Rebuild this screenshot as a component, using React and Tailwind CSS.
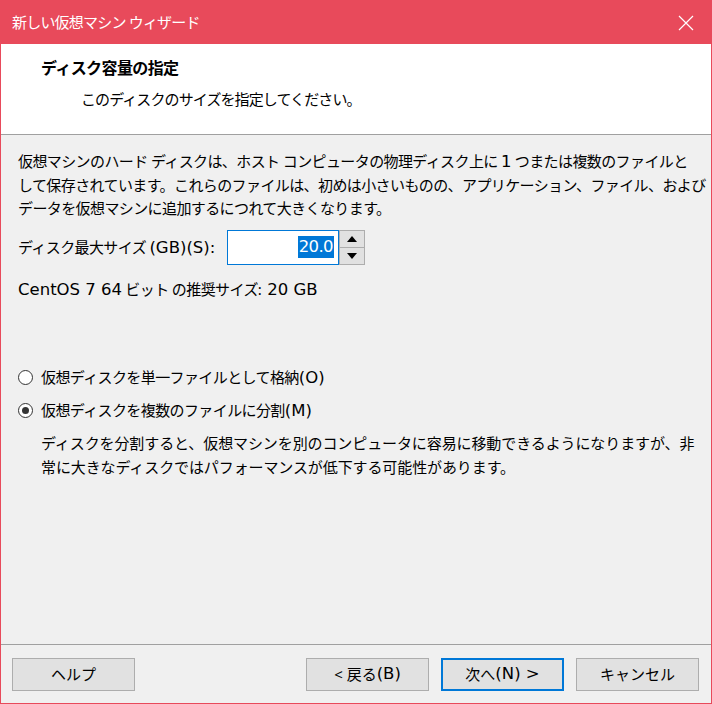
import React from "react";

const font = "font-['Noto_Sans','Noto_Sans_CJK_JP',sans-serif]";

// latin runs in the shot are Segoe UI-ish, much wider than the kana
const L = ({ children }) => (
    <span className="font-['DejaVu_Sans',sans-serif] text-[16.5px] leading-none tracking-normal">{children}</span>
);

const Btn = ({ children, primary }) => (
    <div
        className={`w-[123px] h-[33px] flex items-center justify-center bg-[#E1E1E1] text-[15px] text-black ${
            primary ? "border-2 border-[#0078D7]" : "border border-[#ADADAD]"
        }`}
    >
        {children}
    </div>
);

const Radio = ({ checked, children }) => (
    <div className="flex items-center h-[24px]">
        <span className="w-[15px] h-[15px] rounded-full border border-[#333] bg-white flex items-center justify-center mr-[8px]">
            {checked && <span className="w-[7px] h-[7px] rounded-full bg-[#333]" />}
        </span>
        <span>{children}</span>
    </div>
);

export default function App() {
    return (
        <div className={`w-[712px] h-[704px] flex flex-col bg-[#F0F0F0] border-x border-b border-[#E84A5B] ${font} text-[15px] text-black`}>
            <div className="h-[44px] -mx-px bg-[#E84A5B] flex items-center justify-between pl-[12px] pr-[18px] text-white">
                <span className="text-[15px] tracking-[-0.8px]">新しい仮想マシン ウィザード</span>
                <svg width="16" height="16" viewBox="0 0 16 16" className="mt-[1px]">
                    <path d="M1 1 L15 15 M15 1 L1 15" stroke="#fff" strokeWidth="1.2" />
                </svg>
            </div>

            <div className="h-[91px] bg-white border-b border-[#A0A0A0] pt-[12px]">
                <div className="pl-[40px] font-bold text-[16px] leading-[24px] tracking-[-0.6px]">ディスク容量の指定</div>
                <div className="pl-[80px] mt-[7px] leading-[24px] tracking-[-0.9px]">このディスクのサイズを指定してください。</div>
            </div>

            <div className="flex-1 pl-[17px] pt-[15px] border-b border-[#A0A0A0]">
                <div className="leading-[23.5px] whitespace-nowrap tracking-[-0.6px]">
                    <div>仮想マシンのハード ディスクは、ホスト コンピュータの物理ディスク上に <L>1</L> つまたは複数のファイルと</div>
                    <div>して保存されています。これらのファイルは、初めは小さいものの、アプリケーション、ファイル、および</div>
                    <div>データを仮想マシンに追加するにつれて大きくなります。</div>
                </div>

                <div className="flex items-center mt-[9px] h-[35px] tracking-[-0.6px]">
                    <span className="w-[209px] whitespace-nowrap">ディスク最大サイズ <L>(GB)(S):</L></span>
                    <div className="w-[112px] h-[35px] border border-[#0078D7] bg-white flex items-center justify-end pr-[4px]">
                        <span className="bg-[#0078D7] text-white font-['DejaVu_Sans',sans-serif] text-[16.5px] leading-[22px] px-px">20.0</span>
                    </div>
                    <div className="w-[26px] h-[35px] flex flex-col border border-[#ADADAD] bg-[#E1E1E1]">
                        <div className="flex-1 flex items-center justify-center border-b border-[#ADADAD]">
                            <svg width="10" height="6" viewBox="0 0 10 6"><path d="M0 6 L5 0 L10 6 Z" fill="#000" /></svg>
                        </div>
                        <div className="flex-1 flex items-center justify-center">
                            <svg width="10" height="6" viewBox="0 0 10 6"><path d="M0 0 L5 6 L10 0 Z" fill="#000" /></svg>
                        </div>
                    </div>
                </div>

                <div className="mt-[12px] leading-[24px] tracking-[-0.6px]">
                    <L>CentOS 7 64</L> ビット の推奨サイズ:<span className="ml-[6px]"><L>20 GB</L></span>
                </div>

                <div className="mt-[65px] tracking-[-0.6px]">
                    <Radio>仮想ディスクを単一ファイルとして格納<L>(O)</L></Radio>
                </div>
                <div className="mt-[9px] tracking-[-0.6px]">
                    <Radio checked>仮想ディスクを複数のファイルに分割<L>(M)</L></Radio>
                </div>
                <div className="pl-[23px] mt-[8px] leading-[24px] whitespace-nowrap tracking-[-0.1px]">
                    <div>ディスクを分割すると、仮想マシンを別のコンピュータに容易に移動できるようになりますが、非</div>
                    <div>常に大きなディスクではパフォーマンスが低下する可能性があります。</div>
                </div>
            </div>

            <div className="h-[58px] flex items-start pt-[13px] pl-[11px] pr-[12px]">
                <Btn>ヘルプ</Btn>
                <div className="flex-1" />
                <div className="flex gap-[12px]">
                    <Btn>&lt;&nbsp;戻る<L>(B)</L></Btn>
                    <Btn primary>次へ<L>(N) &gt;</L></Btn>
                    <Btn>キャンセル</Btn>
                </div>
            </div>
        </div>
    );
}
